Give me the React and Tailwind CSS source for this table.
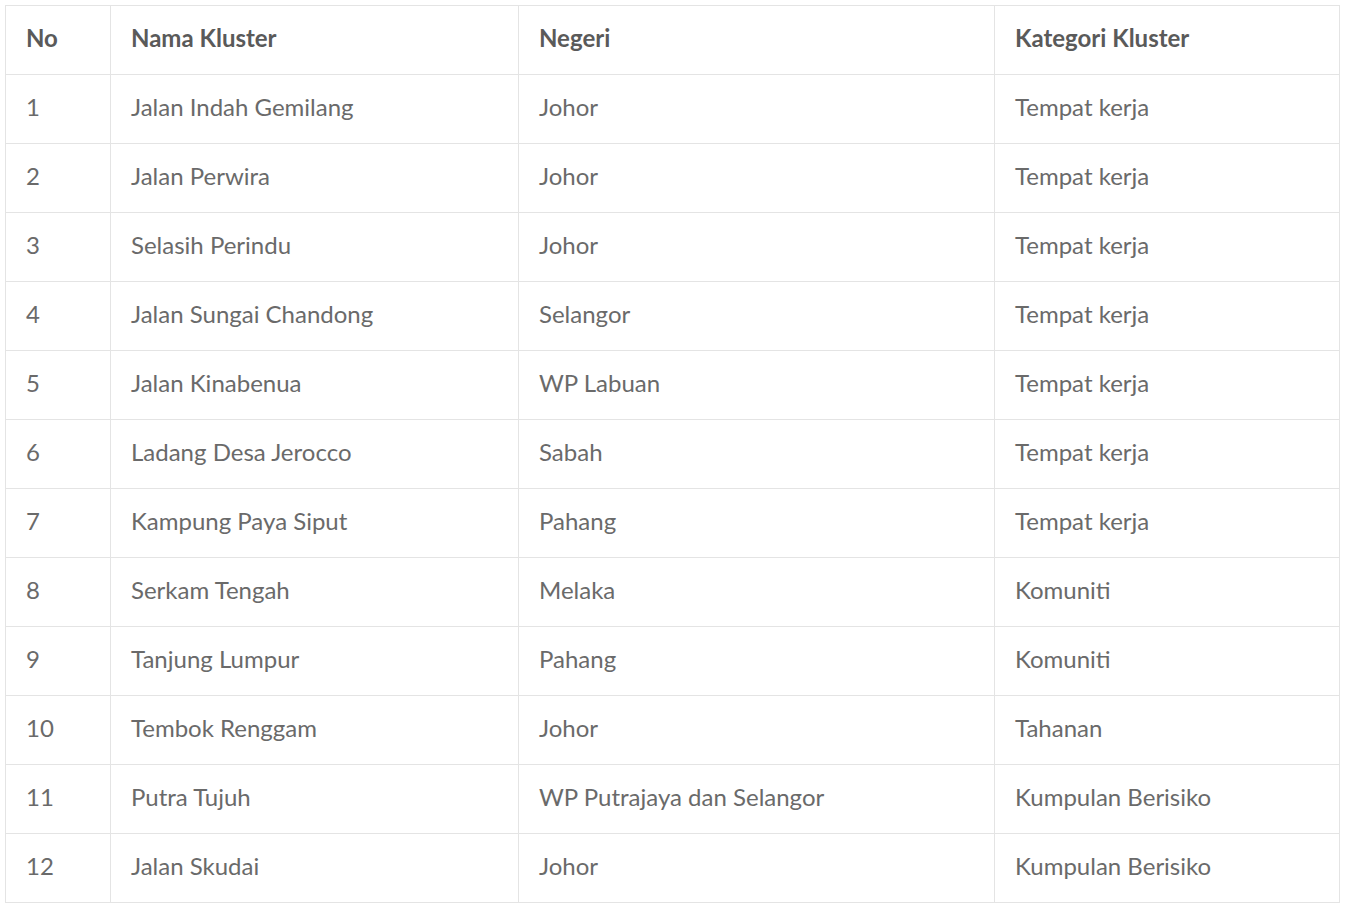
import React from 'react';

const rows = [
  ['1', 'Jalan Indah Gemilang', 'Johor', 'Tempat kerja'],
  ['2', 'Jalan Perwira', 'Johor', 'Tempat kerja'],
  ['3', 'Selasih Perindu', 'Johor', 'Tempat kerja'],
  ['4', 'Jalan Sungai Chandong', 'Selangor', 'Tempat kerja'],
  ['5', 'Jalan Kinabenua', 'WP Labuan', 'Tempat kerja'],
  ['6', 'Ladang Desa Jerocco', 'Sabah', 'Tempat kerja'],
  ['7', 'Kampung Paya Siput', 'Pahang', 'Tempat kerja'],
  ['8', 'Serkam Tengah', 'Melaka', 'Komuniti'],
  ['9', 'Tanjung Lumpur', 'Pahang', 'Komuniti'],
  ['10', 'Tembok Renggam', 'Johor', 'Tahanan'],
  ['11', 'Putra Tujuh', 'WP Putrajaya dan Selangor', 'Kumpulan Berisiko'],
  ['12', 'Jalan Skudai', 'Johor', 'Kumpulan Berisiko'],
];

const cell = 'h-[69px] border border-[#e4e4e4] pl-5 pr-5 pb-[4px] align-middle';

export default function App() {
  return (
    <div className="bg-white p-[5px] text-[#6a6a6a] font-['Lato',sans-serif] text-[24px]">
      <table className="w-[1334px] border-collapse table-fixed">
        <colgroup>
          <col className="w-[105px]" />
          <col className="w-[408px]" />
          <col className="w-[476px]" />
          <col className="w-[345px]" />
        </colgroup>
        <thead>
          <tr className="text-left font-bold text-[#5a5a5a]">
            <th className={cell}>No</th>
            <th className={cell}>Nama Kluster</th>
            <th className={cell}>Negeri</th>
            <th className={cell}>Kategori Kluster</th>
          </tr>
        </thead>
        <tbody>
          {rows.map((r) => (
            <tr key={r[0]}>
              {r.map((c, i) => (
                <td key={i} className={cell}>{c}</td>
              ))}
            </tr>
          ))}
        </tbody>
      </table>
    </div>
  );
}
